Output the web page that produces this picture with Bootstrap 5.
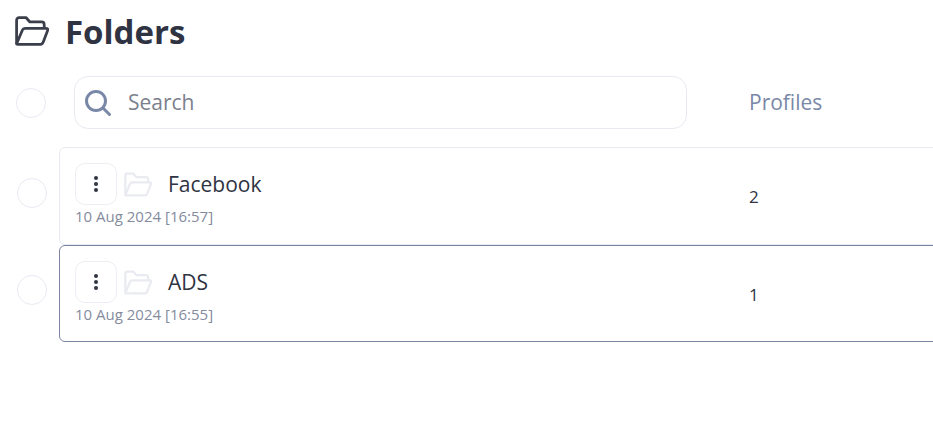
<!DOCTYPE html>
<html lang="en">
<head>
    <meta charset="UTF-8">
    <meta name="viewport" content="width=device-width, initial-scale=1.0">
    <title>Folders</title>
    <link rel="stylesheet" href="https://cdn.jsdelivr.net/npm/bootstrap@5.3.0/dist/css/bootstrap.min.css">
    <style>
        html, body { overflow: hidden; height: 100%; }
        body { font-family: "Open Sans", sans-serif; color: #2f3342; background: #fff; }
        .page-wrap { padding: 14px 0 0 15px; }
        .page-title { font-size: 33px; font-weight: 700; line-height: 36px; color: #2f3342; margin: 0 0 0 16px; }
        .title-icon { width: 34px; height: 30px; display: block; margin-top: 2px; flex: none; }
        .head-row { margin-top: 26px; padding-left: 1px; }
        .tick { width: 30px; height: 30px; border: 1px solid #e8eaf2; border-radius: 50%; flex: none; background: #fff; }
        .search-box { width: 613px; height: 53px; margin-left: 28px; border: 1px solid #e8eaf2; border-radius: 14px; padding-left: 9px; flex: none; }
        .search-box svg { width: 28px; height: 28px; flex: none; }
        .search-box input { border: 0; outline: 0; padding: 0; margin-left: 16px; font-size: 21px; color: #2f3342; flex: 1; min-width: 0; background: transparent; }
        .search-box input::placeholder { color: #7b7f8c; opacity: 1; }
        .col-head { margin-left: 62px; font-size: 21px; color: #7a88a8; }
        .rows { margin-top: 18px; }
        .tick-cell { width: 44px; flex: none; padding-left: 2px; margin-bottom: 7px; }
        .row-box { flex: 1; margin-right: -20px; height: 98px; border: 1px solid #e8eaf0; border-radius: 6px; padding: 15px 0 0 15px; }
        .row-box.is-active { border-color: #7a84a0; height: 97px; }
        .kebab-btn { width: 42px; height: 42px; padding: 0; border: 1px solid #eceef3; border-radius: 10px; background: #fff; flex: none; }
        .kebab-btn svg { width: 6px; height: 18px; display: block; margin: 0 auto; }
        .row-folder { width: 28px; height: 25px; margin-left: 7px; flex: none; }
        .row-name { font-size: 21px; line-height: 27px; margin-left: 16px; color: #2f3342; }
        .row-date { font-size: 15px; line-height: 20px; color: #858b9e; margin-top: 1px; }
        .name-cell { width: 674px; flex: none; }
        .row-count { font-size: 17px; color: #2f3342; margin-top: -13px; }
    </style>
</head>
<body>
    <div class="page-wrap">
        <!-- Title -->
        <div class="d-flex align-items-start">
            <svg class="title-icon" viewBox="1.5 1.5 32 28" fill="none" stroke="#3a3f4b" stroke-width="2.6" stroke-linejoin="round" stroke-linecap="round">
                <path d="M3 27V5.5Q3 3 5.5 3H12L15.5 7H26.5Q29 7 29 9.5V12"/>
                <path d="M3 27.5L8.5 14.5Q9 13 11 13H30.5Q33 13 32.2 15L28 26Q27.4 28 25.5 28H4Q3 28 3 27.5Z"/>
            </svg>
            <h1 class="page-title">Folders</h1>
        </div>

        <!-- Search and column head -->
        <div class="d-flex align-items-center head-row">
            <div class="tick"></div>
            <div class="search-box d-flex align-items-center">
                <svg viewBox="0 0 28 28" fill="none" stroke="#7a88a8" stroke-width="3" stroke-linecap="round">
                    <circle cx="12" cy="12" r="9.5"/>
                    <path d="M19 19L25.5 25.5"/>
                </svg>
                <input type="text" placeholder="Search">
            </div>
            <div class="col-head">Profiles</div>
        </div>

        <!-- Folder rows -->
        <div class="rows" id="folderRows"></div>
    </div>

    <script src="https://cdn.jsdelivr.net/npm/bootstrap@5.3.0/dist/js/bootstrap.bundle.min.js"></script>
    <script>
        const folders = [
            { name: 'Facebook', date: '10 Aug 2024 [16:57]', count: 2, active: false },
            { name: 'ADS', date: '10 Aug 2024 [16:55]', count: 1, active: true },
        ];

        document.getElementById('folderRows').innerHTML = folders.map(f => `
            <div class="d-flex align-items-center">
                <div class="tick-cell"><div class="tick"></div></div>
                <div class="row-box d-flex align-items-start${f.active ? ' is-active' : ''}">
                    <div class="name-cell">
                        <div class="d-flex align-items-center">
                            <button class="kebab-btn d-flex align-items-center" type="button" aria-label="Menu">
                                <svg viewBox="0 0 6 18" fill="#2f3342"><circle cx="3" cy="3" r="2"/><circle cx="3" cy="9" r="2"/><circle cx="3" cy="15" r="2"/></svg>
                            </button>
                            <svg class="row-folder" viewBox="1.5 1.5 32 28" fill="none" stroke="#e9ebf1" stroke-width="2.6" stroke-linejoin="round" stroke-linecap="round">
                                <path d="M3 27V5.5Q3 3 5.5 3H12L15.5 7H26.5Q29 7 29 9.5V12"/>
                                <path d="M3 27.5L8.5 14.5Q9 13 11 13H30.5Q33 13 32.2 15L28 26Q27.4 28 25.5 28H4Q3 28 3 27.5Z"/>
                            </svg>
                            <span class="row-name">${f.name}</span>
                        </div>
                        <div class="row-date">${f.date}</div>
                    </div>
                    <div class="row-count align-self-center">${f.count}</div>
                </div>
            </div>
        `).join('');
    </script>
</body>
</html>
